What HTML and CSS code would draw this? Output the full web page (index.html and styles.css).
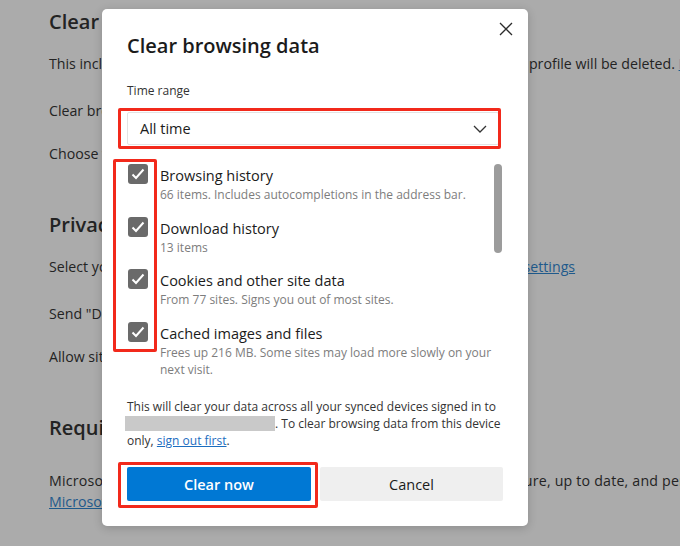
FILE: index.html
```html
<!DOCTYPE html>
<html lang="en">
<head>
  <meta charset="UTF-8">
  <meta name="viewport" content="width=device-width, initial-scale=1.0">
  <title>Clear browsing data</title>
  <link rel="stylesheet" href="styles.css">
</head>
<body>
  <!-- Settings page behind the modal -->
  <div class="page">
    <h2 class="page-h first">Clear browsing data</h2>
    <p class="page-line gap-s">This includes history, passwords, cookies, and more. Only data from this profile will be deleted. <a href="#">Manage your data</a></p>
    <div class="page-line gap-m">Clear browsing data now</div>
    <div class="page-line gap-s2">Choose what to clear every time you close the browser</div>

    <h2 class="page-h">Privacy</h2>
    <p class="page-line gap-s">Select your privacy settings for Microsoft Edge. <a href="#">Learn more about these settings</a></p>
    <div class="page-line gap-m">Send "Do Not Track" requests</div>
    <div class="page-line gap-s2">Allow sites to check if you have payment methods saved</div>

    <h2 class="page-h">Required diagnostic data</h2>
    <p class="page-line two"><span class="diag">Microsoft collects required diagnostic data to keep Microsoft Edge secure, up to date, and performing as expected</span><br><a href="#">Microsoft privacy statement</a></p>
  </div>

  <!-- Modal -->
  <div class="dialog">
    <button class="close" aria-label="Close">
      <svg width="14" height="14" viewBox="0 0 14 14"><path d="M1 1 L13 13 M13 1 L1 13" stroke="#2b2b2b" stroke-width="1.3" fill="none"/></svg>
    </button>

    <h1 class="title">Clear browsing data</h1>

    <div class="label">Time range</div>
    <div class="select-wrap">
      <div class="select">
        <span>All time</span>
        <svg width="14" height="8" viewBox="0 0 14 8"><path d="M1 1 L7 7 L13 1" stroke="#333" stroke-width="1.3" fill="none"/></svg>
      </div>
      <span class="mark mark-select"></span>
    </div>

    <div class="list">
      <div class="item">
        <span class="check"><svg width="14" height="12" viewBox="0 0 14 12"><path d="M1.5 6.5 L5 10 L12.5 1.5" stroke="#fff" stroke-width="2" fill="none"/></svg></span>
        <div class="item-text">
          <div class="item-title">Browsing history</div>
          <div class="item-sub">66 items. Includes autocompletions in the address bar.</div>
        </div>
      </div>
      <div class="item">
        <span class="check"><svg width="14" height="12" viewBox="0 0 14 12"><path d="M1.5 6.5 L5 10 L12.5 1.5" stroke="#fff" stroke-width="2" fill="none"/></svg></span>
        <div class="item-text">
          <div class="item-title">Download history</div>
          <div class="item-sub">13 items</div>
        </div>
      </div>
      <div class="item">
        <span class="check"><svg width="14" height="12" viewBox="0 0 14 12"><path d="M1.5 6.5 L5 10 L12.5 1.5" stroke="#fff" stroke-width="2" fill="none"/></svg></span>
        <div class="item-text">
          <div class="item-title">Cookies and other site data</div>
          <div class="item-sub">From 77 sites. Signs you out of most sites.</div>
        </div>
      </div>
      <div class="item">
        <span class="check"><svg width="14" height="12" viewBox="0 0 14 12"><path d="M1.5 6.5 L5 10 L12.5 1.5" stroke="#fff" stroke-width="2" fill="none"/></svg></span>
        <div class="item-text">
          <div class="item-title">Cached images and files</div>
          <div class="item-sub">Frees up 216 MB. Some sites may load more slowly on your next visit.</div>
        </div>
      </div>
      <span class="thumb"></span>
      <span class="mark mark-checks"></span>
    </div>

    <p class="note">This will clear your data across all your synced devices signed in to <span class="redact"></span>. To clear browsing data from this device only, <a href="#">sign out first</a>.</p>

    <div class="actions">
      <div class="btn-wrap">
        <button class="btn primary">Clear now</button>
        <span class="mark mark-btn"></span>
      </div>
      <button class="btn cancel">Cancel</button>
    </div>
  </div>
</body>
</html>
```

FILE: styles.css
```css
html, body {
  margin: 0;
  padding: 0;
}
body {
  width: 680px;
  height: 546px;
  overflow: hidden;
  background: #ababab;
  font-family: "Open Sans", "Noto Sans", sans-serif;
  color: #232323;
  position: relative;
}

/* background settings page */
.page {
  padding: 8px 0 0 49px;
  white-space: nowrap;
  font-size: 14.2px;
}
.page a {
  color: #1f5a8c;
}
.page-h {
  margin: 47px 0 0;
  font-size: 20px;
  font-weight: 600;
  line-height: 28px;
}
.page-h.first {
  margin-top: 0;
}
.page-line {
  margin: 0;
  line-height: 20px;
}
.gap-s {
  margin-top: 18px;
}
.gap-m {
  margin-top: 27px;
}
.gap-s2 {
  margin-top: 23px;
}
.page-line.two {
  margin-top: 28px;
  line-height: 21px;
}
.diag {
  letter-spacing: 0.2px;
}

/* modal */
.dialog {
  position: absolute;
  left: 102px;
  top: 9px;
  width: 376px;
  padding: 23px 25px 25px;
  background: #fff;
  border-radius: 5px;
  box-shadow: 0 2px 10px rgba(0, 0, 0, 0.18);
  color: #1b1b1b;
}
.close {
  position: absolute;
  top: 10px;
  right: 12px;
  border: none;
  background: none;
  padding: 3px;
  line-height: 0;
}
.title {
  margin: 0;
  font-size: 20px;
  font-weight: 600;
  line-height: 28px;
}
.label {
  margin-top: 22px;
  font-size: 12px;
  line-height: 18px;
  color: #333;
}

.select-wrap {
  position: relative;
  margin-top: 12px;
  width: 372px;
}
.select {
  height: 31px;
  border: 1px solid #e3e3e3;
  border-radius: 2px;
  display: flex;
  align-items: center;
  justify-content: space-between;
  padding: 0 11px 0 12px;
  font-size: 14.5px;
}

.mark {
  position: absolute;
  border: 3px solid #f2291b;
  border-radius: 2px;
  pointer-events: none;
}
.mark-select {
  left: -9px;
  top: -4px;
  right: -2px;
  bottom: -4px;
}

.list {
  position: relative;
  margin-top: 15px;
  padding-top: 4px;
  height: 221px;
}
.item {
  display: flex;
  gap: 12px;
  margin-bottom: 13.5px;
}
.check {
  flex: none;
  width: 20px;
  height: 20px;
  margin-left: 1px;
  border-radius: 3px;
  background: #6a6a6a;
  display: flex;
  align-items: center;
  justify-content: center;
}
.item-text {
  padding-top: 2px;
}
.item-title {
  font-size: 14.5px;
  line-height: 20px;
}
.item-sub {
  font-size: 12px;
  line-height: 17px;
  color: #7d7d7d;
}
.thumb {
  position: absolute;
  left: 367px;
  top: 4px;
  width: 8px;
  height: 89px;
  border-radius: 4px;
  background: #9c9c9c;
}
.mark-checks {
  left: -14px;
  top: -1px;
  width: 38px;
  height: 187px;
}

.note {
  margin: 12.5px 0 0;
  font-size: 12px;
  line-height: 17px;
  color: #333;
}
.note a {
  color: #1c6dbf;
}
.redact {
  display: inline-block;
  width: 150px;
  height: 15px;
  vertical-align: -3px;
  margin-left: -2px;
  background: #c9c9c9;
}

.actions {
  display: flex;
  gap: 9px;
  margin-top: 18.5px;
}
.btn-wrap {
  position: relative;
  width: 184px;
  display: flex;
}
.btn {
  width: 100%;
  height: 34px;
  padding: 0;
  border: none;
  border-radius: 2px;
  background: #efefef;
  font-family: inherit;
  font-size: 14.5px;
  color: #1b1b1b;
}
.btn.cancel {
  width: 183px;
}
.btn.primary {
  background: #0078d4;
  color: #fff;
  font-weight: 600;
}
.mark-btn {
  left: -9px;
  top: -5px;
  right: -7px;
  bottom: -7px;
}
```
